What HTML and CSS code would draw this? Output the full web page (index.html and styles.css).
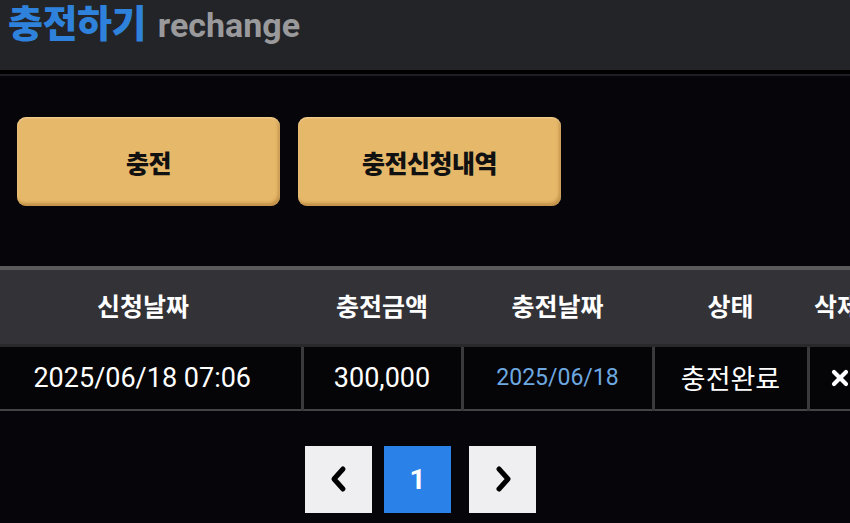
FILE: index.html
```html
<!DOCTYPE html>
<html lang="ko">
<head>
<meta charset="utf-8">
<title>충전하기</title>
<link rel="stylesheet" href="styles.css">
</head>
<body>
<div class="page">
  <header class="topbar">
    <h1 class="title"><span class="title-ko">충전하기</span><span class="title-en">rechange</span></h1>
  </header>
  <div class="divider"></div>
  <div class="tabs">
    <button class="tab">충전</button>
    <button class="tab">충전신청내역</button>
  </div>
  <table class="history">
    <colgroup>
      <col class="c1"><col class="c2"><col class="c3"><col class="c4"><col class="c5">
    </colgroup>
    <thead>
      <tr><th>신청날짜</th><th>충전금액</th><th>충전날짜</th><th>상태</th><th>삭제</th></tr>
    </thead>
    <tbody>
      <tr>
        <td>2025/06/18 07:06</td>
        <td>300,000</td>
        <td class="done-date">2025/06/18</td>
        <td>충전완료</td>
        <td class="del"><svg width="20" height="20" viewBox="0 0 20 20"><path d="M4 4 L16 16 M16 4 L4 16" stroke="#fff" stroke-width="4.2" stroke-linecap="round"/></svg></td>
      </tr>
    </tbody>
  </table>
  <nav class="pager">
    <a class="pg pg-arrow"><svg width="24" height="30" viewBox="0 0 24 30"><polyline points="16,5 7,15 16,25" fill="none" stroke="#000" stroke-width="5" stroke-linecap="round" stroke-linejoin="round"/></svg></a>
    <a class="pg pg-active">1</a>
    <a class="pg pg-arrow"><svg width="24" height="30" viewBox="0 0 24 30"><polyline points="8,5 17,15 8,25" fill="none" stroke="#000" stroke-width="5" stroke-linecap="round" stroke-linejoin="round"/></svg></a>
  </nav>
</div>
</body>
</html>
```
FILE: styles.css
```css
html, body {
  margin: 0;
  padding: 0;
  background: #060509;
  overflow: hidden;
}
.page {
  width: 850px;
  height: 523px;
  overflow: hidden;
  font-family: Roboto, "Noto Sans CJK KR", sans-serif;
}
.topbar {
  height: 70px;
  background: #232428;
  display: flex;
  align-items: flex-start;
}
.title {
  margin: 0;
  padding: 0 0 0 8px;
  display: flex;
  align-items: baseline;
  gap: 12px;
  line-height: 42px;
  font-weight: 700;
}
.title-ko {
  font-family: "Noto Sans CJK KR", sans-serif;
  font-size: 38px;
  font-weight: 800;
  color: #2f82dc;
  letter-spacing: -0.5px;
}
.title-en {
  font-family: Roboto, sans-serif;
  font-size: 34px;
  color: #9a9a9c;
}
.divider {
  height: 6px;
  background: #000;
  border-bottom: 2px solid #1e1d23;
  box-sizing: border-box;
}
.tabs {
  display: flex;
  gap: 18px;
  padding: 41px 0 0 17px;
  height: 190px;
  box-sizing: border-box;
}
.tab {
  width: 263px;
  height: 89px;
  border: none;
  border-radius: 9px;
  background: #e6b86a;
  box-shadow: inset 0 1px 2px rgba(255,240,200,0.5), inset -2px -3px 3px rgba(150,100,30,0.45);
  font-family: "Noto Sans CJK KR", sans-serif;
  font-size: 25px;
  font-weight: 900;
  color: #111;
  padding: 0;
  letter-spacing: -0.5px;
}
.history {
  width: 882px;
  margin-left: -16px;
  border-collapse: collapse;
  table-layout: fixed;
}
.c1 { width: 318px; }
.c2 { width: 160px; }
.c3 { width: 191px; }
.c4 { width: 155px; }
.c5 { width: 58px; }
.history th {
  height: 77px;
  padding: 0 0 3px;
  background: #333236;
  border-top: 4px solid #5a5a5c;
  color: #fff;
  font-family: "Noto Sans CJK KR", sans-serif;
  font-size: 25px;
  font-weight: 700;
  text-align: center;
  box-sizing: border-box;
}
.history td {
  height: 62px;
  padding: 0;
  background: #050407;
  border-top: 3px solid #29292b;
  border-bottom: 2px solid #444446;
  border-left: 3px solid #3a3a3c;
  color: #fff;
  font-family: Roboto, "Noto Sans CJK KR", sans-serif;
  font-size: 27px;
  text-align: center;
}
.history td:first-child { border-left: none; }
.history td.done-date {
  color: #6da8e0;
  font-size: 23px;
}
.history td.del { text-align: left; }
.history td.del svg { display: block; margin-left: 20px; }
.pager {
  display: flex;
  padding: 35px 0 0 305px;
  gap: 12px;
}
.pg {
  width: 67px;
  height: 67px;
  display: flex;
  align-items: center;
  justify-content: center;
  background: #efeff1;
}
.pg + .pg + .pg { margin-left: 6px; }
.pg-active {
  background: #2a82e8;
  color: #fff;
  font-family: Roboto, sans-serif;
  font-size: 28px;
  font-weight: 700;
}
```
